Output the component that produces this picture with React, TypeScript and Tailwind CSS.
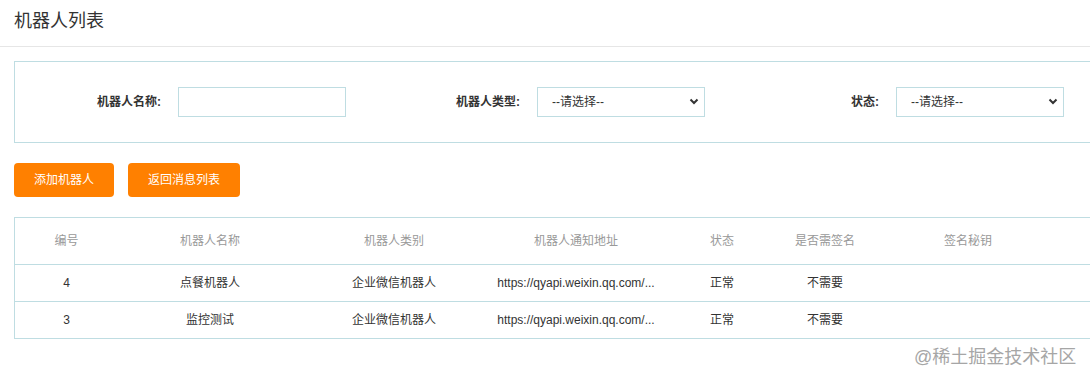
import React from 'react';

interface Robot {
  id: number;
  name: string;
  category: string;
  url: string;
  status: string;
  needSign: string;
  secret: string;
}

const robots: Robot[] = [
  { id: 4, name: '点餐机器人', category: '企业微信机器人', url: 'https://qyapi.weixin.qq.com/...', status: '正常', needSign: '不需要', secret: '' },
  { id: 3, name: '监控测试', category: '企业微信机器人', url: 'https://qyapi.weixin.qq.com/...', status: '正常', needSign: '不需要', secret: '' },
];

const headers = ['编号', '机器人名称', '机器人类别', '机器人通知地址', '状态', '是否需签名', '签名秘钥', ''];

const cols = 'grid grid-cols-[103px_184px_184px_180px_112px_94px_192px_1fr]';

const SelectBox: React.FC = () => (
  <div className="relative w-[168px] h-[30px]">
    <select className="appearance-none w-full h-full border border-[#bfdde2] bg-white pl-[14px] text-[12px] text-[#333] outline-none">
      <option>--请选择--</option>
    </select>
    <svg className="absolute right-[6px] top-[11px] pointer-events-none" width="10" height="7" viewBox="0 0 10 7">
      <path d="M1.5 1.5 L5 5 L8.5 1.5" fill="none" stroke="#333" strokeWidth="2" />
    </svg>
  </div>
);

const FilterItem: React.FC<{ label: string; children: React.ReactNode }> = ({ label, children }) => (
  <div className="flex items-center">
    <span className="w-[146px] text-right text-[12px] font-bold text-[#333] leading-[16px]">{label}</span>
    <div className="ml-[17px]">{children}</div>
  </div>
);

export default function App() {
  return (
    <div
      className="relative w-full h-[381px] overflow-hidden bg-white pl-[14px]"
      style={{ fontFamily: '"Liberation Sans", "Noto Sans CJK SC", sans-serif' }}
    >
      {/* page title */}
      <div className="-ml-[14px] pl-[14px] h-[47px] border-b border-[#e6e6e6] pt-[9px]">
        <h1 className="text-[18px] leading-[24px] text-[#333]">机器人列表</h1>
      </div>

      {/* filters */}
      <div className="mt-[14px] w-[1080px] h-[82px] border border-[#bfdde2] grid grid-cols-[359px_359px_359px] items-center">
        <FilterItem label="机器人名称:">
          <input type="text" className="w-[168px] h-[30px] border border-[#bfdde2] outline-none px-2 text-[12px]" />
        </FilterItem>
        <FilterItem label="机器人类型:">
          <SelectBox />
        </FilterItem>
        <FilterItem label="状态:">
          <SelectBox />
        </FilterItem>
      </div>

      {/* actions */}
      <div className="mt-[20px] flex gap-[14px]">
        <button className="h-[34px] px-[20px] rounded-[4px] bg-[#ff8000] text-white text-[12px]">添加机器人</button>
        <button className="h-[34px] px-[20px] rounded-[4px] bg-[#ff8000] text-white text-[12px]">返回消息列表</button>
      </div>

      {/* table */}
      <div className="mt-[20px] w-[1110px] border-t border-l border-[#bfdde2]">
        <div className={`${cols} h-[47px] items-center border-b border-[#bfdde2] text-[12px] text-[#999]`}>
          {headers.map((h, i) => (
            <div key={i} className="text-center">{h}</div>
          ))}
        </div>
        {robots.map((r) => (
          <div key={r.id} className={`${cols} h-[37px] items-center border-b border-[#bfdde2] text-[12px] text-[#333]`}>
            <div className="text-center">{r.id}</div>
            <div className="text-center">{r.name}</div>
            <div className="text-center">{r.category}</div>
            <div className="text-center whitespace-nowrap">{r.url}</div>
            <div className="text-center">{r.status}</div>
            <div className="text-center">{r.needSign}</div>
            <div className="text-center">{r.secret}</div>
            <div />
          </div>
        ))}
      </div>

      {/* watermark */}
      <div className="absolute left-[914px] top-[346px] text-[18px] leading-[22px] text-[#a6a6a6] whitespace-nowrap">
        @稀土掘金技术社区
      </div>
    </div>
  );
}
